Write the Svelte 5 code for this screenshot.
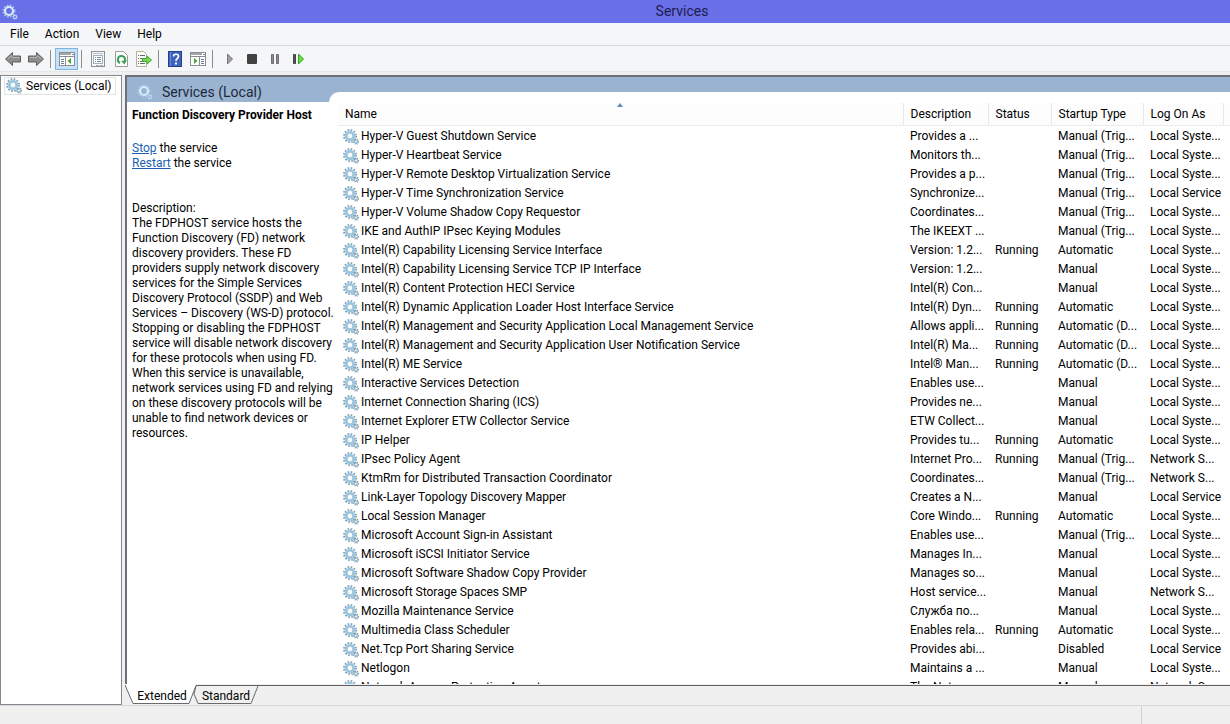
<script>
  const menus = ['File', 'Action', 'View', 'Help'];

  const columns = ['Name', 'Description', 'Status', 'Startup Type', 'Log On As'];

  const services = [
    ['Hyper-V Guest Shutdown Service', 'Provides a ...', '', 'Manual (Trig...', 'Local Syste...'],
    ['Hyper-V Heartbeat Service', 'Monitors th...', '', 'Manual (Trig...', 'Local Syste...'],
    ['Hyper-V Remote Desktop Virtualization Service', 'Provides a p...', '', 'Manual (Trig...', 'Local Syste...'],
    ['Hyper-V Time Synchronization Service', 'Synchronize...', '', 'Manual (Trig...', 'Local Service'],
    ['Hyper-V Volume Shadow Copy Requestor', 'Coordinates...', '', 'Manual (Trig...', 'Local Syste...'],
    ['IKE and AuthIP IPsec Keying Modules', 'The IKEEXT ...', '', 'Manual (Trig...', 'Local Syste...'],
    ['Intel(R) Capability Licensing Service Interface', 'Version: 1.2...', 'Running', 'Automatic', 'Local Syste...'],
    ['Intel(R) Capability Licensing Service TCP IP Interface', 'Version: 1.2...', '', 'Manual', 'Local Syste...'],
    ['Intel(R) Content Protection HECI Service', 'Intel(R) Con...', '', 'Manual', 'Local Syste...'],
    ['Intel(R) Dynamic Application Loader Host Interface Service', 'Intel(R) Dyn...', 'Running', 'Automatic', 'Local Syste...'],
    ['Intel(R) Management and Security Application Local Management Service', 'Allows appli...', 'Running', 'Automatic (D...', 'Local Syste...'],
    ['Intel(R) Management and Security Application User Notification Service', 'Intel(R) Ma...', 'Running', 'Automatic (D...', 'Local Syste...'],
    ['Intel(R) ME Service', 'Intel® Man...', 'Running', 'Automatic (D...', 'Local Syste...'],
    ['Interactive Services Detection', 'Enables use...', '', 'Manual', 'Local Syste...'],
    ['Internet Connection Sharing (ICS)', 'Provides ne...', '', 'Manual', 'Local Syste...'],
    ['Internet Explorer ETW Collector Service', 'ETW Collect...', '', 'Manual', 'Local Syste...'],
    ['IP Helper', 'Provides tu...', 'Running', 'Automatic', 'Local Syste...'],
    ['IPsec Policy Agent', 'Internet Pro...', 'Running', 'Manual (Trig...', 'Network S...'],
    ['KtmRm for Distributed Transaction Coordinator', 'Coordinates...', '', 'Manual (Trig...', 'Network S...'],
    ['Link-Layer Topology Discovery Mapper', 'Creates a N...', '', 'Manual', 'Local Service'],
    ['Local Session Manager', 'Core Windo...', 'Running', 'Automatic', 'Local Syste...'],
    ['Microsoft Account Sign-in Assistant', 'Enables use...', '', 'Manual (Trig...', 'Local Syste...'],
    ['Microsoft iSCSI Initiator Service', 'Manages In...', '', 'Manual', 'Local Syste...'],
    ['Microsoft Software Shadow Copy Provider', 'Manages so...', '', 'Manual', 'Local Syste...'],
    ['Microsoft Storage Spaces SMP', 'Host service...', '', 'Manual', 'Network S...'],
    ['Mozilla Maintenance Service', 'Служба по...', '', 'Manual', 'Local Syste...'],
    ['Multimedia Class Scheduler', 'Enables rela...', 'Running', 'Automatic', 'Local Syste...'],
    ['Net.Tcp Port Sharing Service', 'Provides abi...', '', 'Disabled', 'Local Service'],
    ['Netlogon', 'Maintains a ...', '', 'Manual', 'Local Syste...'],
    ['Network Access Protection Agent', 'The Networ...', '', 'Manual', 'Network S...']
  ];

  const description = [
    'The FDPHOST service hosts the',
    'Function Discovery (FD) network',
    'discovery providers. These FD',
    'providers supply network discovery',
    'services for the Simple Services',
    'Discovery Protocol (SSDP) and Web',
    'Services – Discovery (WS-D) protocol.',
    'Stopping or disabling the FDPHOST',
    'service will disable network discovery',
    'for these protocols when using FD.',
    'When this service is unavailable,',
    'network services using FD and relying',
    'on these discovery protocols will be',
    'unable to find network devices or',
    'resources.'
  ].join('\n');

  let view = $state('Extended');
</script>

{#snippet gear()}
  <svg class="gear" viewBox="0 0 16 16" width="16" height="16" aria-hidden="true">
    <circle cx="7" cy="7" r="6" fill="none" stroke="#86a3b4" stroke-width="2" stroke-dasharray="1.6 1.54" />
    <circle cx="7" cy="7" r="4.1" fill="#f6fbfe" stroke="#9cc8e2" stroke-width="2.4" />
    <circle cx="7" cy="7" r="2.9" fill="none" stroke="#7fa6bf" stroke-width="0.6" />
    <circle cx="13" cy="12.5" r="2.4" fill="none" stroke="#7593a6" stroke-width="1.4" stroke-dasharray="1 0.88" />
    <circle cx="13" cy="12.5" r="1.5" fill="#eef6fb" stroke="#7fabc6" stroke-width="1" />
  </svg>
{/snippet}

{#snippet paleGear()}
  <svg viewBox="0 0 16 16" width="16" height="16" aria-hidden="true">
    <circle cx="7" cy="7" r="5.7" fill="none" stroke="#a9c9f0" stroke-width="1.6" stroke-dasharray="1.6 1.4" />
    <circle cx="7" cy="7" r="4" fill="none" stroke="#d6ecfa" stroke-width="2.2" />
    <circle cx="13" cy="13" r="1.7" fill="none" stroke="#b5d3ee" stroke-width="1.5" />
  </svg>
{/snippet}

<div class="window">
  <header class="titlebar">
    {@render paleGear()}
    <h1>Services</h1>
  </header>

  <nav class="menubar">
    {#each menus as menu}
      <button>{menu}</button>
    {/each}
  </nav>

  <div class="toolbar">
    <button aria-label="Back">
      <svg viewBox="0 0 18 16" width="18" height="16"><path d="M1.5 8 8.5 1.5V5H16.5V11H8.5V14.5Z" fill="#8d8d8d" stroke="#5e5e5e" /><path d="M4 7.5 8 4.5V6.5H15.5" fill="none" stroke="#b5b5b5" /></svg>
    </button>
    <button aria-label="Forward">
      <svg viewBox="0 0 18 16" width="18" height="16"><path d="M16.5 8 9.5 1.5V5H1.5V11H9.5V14.5Z" fill="#8d8d8d" stroke="#5e5e5e" /><path d="M2.5 6.5H10V4.5L14 7.5" fill="none" stroke="#b5b5b5" /></svg>
    </button>
    <span class="separator"></span>
    <button class="pressed" aria-label="Show/Hide Console Tree">
      <svg viewBox="0 0 16 16" width="16" height="16">
        <rect x=".5" y="1.5" width="15" height="13" fill="#fff" stroke="#8b8f92" />
        <path d="M1 3H12" stroke="#a3a7aa" stroke-width="2" />
        <path d="M13 3.5H15" stroke="#6b7f94" />
        <path d="M1 5.5H15M6.5 6V14" stroke="#8b8f92" />
        <path d="M2 8.5H5M2 10.5H5M2 12.5H5" stroke="#6b7f94" />
        <path d="M12 7V13L8.5 10Z" fill="#4aa52e" />
      </svg>
    </button>
    <span class="separator"></span>
    <button aria-label="Properties">
      <svg viewBox="0 0 16 16" width="16" height="16">
        <rect x="1.5" y=".5" width="13" height="15" fill="#f8f9fa" stroke="#8b9298" />
        <path d="M3 2.5H13" stroke="#b6bdc3" />
        <rect x="3.5" y="4.5" width="9" height="8" fill="#fff" stroke="#9fb0bf" />
        <path d="M5 6.5H6M7 6.5H11M5 8.5H6M7 8.5H11M5 10.5H6M7 10.5H11" stroke="#6f8ba5" />
        <path d="M6 14.5H9M10 14.5H13" stroke="#a6adb3" />
      </svg>
    </button>
    <button aria-label="Refresh">
      <svg viewBox="0 0 16 16" width="16" height="16">
        <path d="M2.5 .5H10.5L14.5 4.5V15.5H2.5Z" fill="#fff" stroke="#9b9b9b" />
        <path d="M7 12A3.6 3.6 0 1 1 12 8.5V10" fill="none" stroke="#3fa25b" stroke-width="2" />
        <path d="M14 9 11.5 13.5 8 10Z" fill="#3fa25b" />
      </svg>
    </button>
    <button aria-label="Export List">
      <svg viewBox="0 0 16 16" width="16" height="16">
        <path d="M.5 .5H7.5L10.5 3.5V15.5H.5Z" fill="#fffef4" stroke="#b5b09b" />
        <path d="M2 4.5H3M2 7.5H3M2 10.5H3M2 12.5H3M4 4.5H9M4 7.5H7M4 10.5H7M4 12.5H9" stroke="#5d6b78" />
        <path d="M6.5 7.5H11V5L15.5 9 11 13V10.5H6.5Z" fill="#7bd75a" stroke="#43a829" />
      </svg>
    </button>
    <span class="separator"></span>
    <button aria-label="Help">
      <svg viewBox="0 0 16 16" width="16" height="16">
        <rect x="1.5" y=".5" width="13" height="15" fill="#3f62bd" stroke="#26418c" />
        <path d="M3.5 1V15" stroke="#6f8bd4" />
        <path d="M6.5 5.5C6.5 2.5 11.5 2.5 11.5 5.5C11.5 7.5 9 7.5 9 10" fill="none" stroke="#fff" stroke-width="1.7" />
        <rect x="8" y="11.5" width="2" height="2" fill="#fff" />
      </svg>
    </button>
    <button aria-label="Show/Hide Action Pane">
      <svg viewBox="0 0 16 16" width="16" height="16">
        <rect x=".5" y="1.5" width="15" height="13" fill="#fff" stroke="#8b8f92" />
        <path d="M1 3H12" stroke="#a3a7aa" stroke-width="2" />
        <path d="M13 3.5H15" stroke="#6b7f94" />
        <path d="M1 5.5H15M9.5 6V14" stroke="#8b8f92" />
        <path d="M11 8.5H14M11 10.5H14M11 12.5H14" stroke="#6b7f94" />
        <path d="M4 7V13L7.5 10Z" fill="#4aa52e" />
      </svg>
    </button>
    <span class="separator"></span>
    <button aria-label="Start Service">
      <svg viewBox="0 0 16 16" width="16" height="16"><path d="M6.5 3V13L11.5 8Z" fill="#a2a2a2" stroke="#777" /></svg>
    </button>
    <button aria-label="Stop Service">
      <svg viewBox="0 0 16 16" width="16" height="16"><rect x="3" y="3" width="10" height="10" rx="1" fill="#424242" /></svg>
    </button>
    <button aria-label="Pause Service">
      <svg viewBox="0 0 16 16" width="16" height="16"><path d="M4.5 3.5H6.5V12.5H4.5ZM9.5 3.5H11.5V12.5H9.5Z" fill="#8c8c8c" stroke="#6e6e6e" /></svg>
    </button>
    <button aria-label="Restart Service">
      <svg viewBox="0 0 16 16" width="16" height="16">
        <path d="M3.5 3.5H5.5V12.5H3.5Z" fill="#555" stroke="#444" />
        <path d="M8.5 3V13L13.5 8Z" fill="#6bdb43" stroke="#33a31a" />
      </svg>
    </button>
  </div>

  <main class="workspace">
    <aside class="tree">
      <button class="node">
        {@render gear()}
        Services (Local)
      </button>
    </aside>

    <section class="content">
      <div class="pane">
        <div class="details">
          <h2>
            {@render paleGear()}
            Services (Local)
          </h2>
          <div class="info">
            <h3>Function Discovery Provider Host</h3>
            <p><a href="#stop">Stop</a> the service<br /><a href="#restart">Restart</a> the service</p>
            <p class="description">Description:<br />{description}</p>
          </div>
        </div>

        <div class="list-area">
          <div class="list">
            <table>
              <colgroup>
                <col />
                <col class="col-description" />
                <col class="col-status" />
                <col class="col-startup" />
                <col class="col-logon" />
                <col class="col-rest" />
              </colgroup>
              <thead>
                <tr>
                  {#each columns as column, i}
                    <th>
                      {column}
                      {#if i === 0}
                        <svg class="sort" viewBox="0 0 6 4" width="6" height="4" aria-hidden="true"><path d="M0 4 3 0 6 4Z" fill="#5d8fb8" /></svg>
                      {/if}
                    </th>
                  {/each}
                  <td></td>
                </tr>
              </thead>
              <tbody>
                {#each services as [name, ...cells]}
                  <tr>
                    <td class="name"><span>{@render gear()}{name}</span></td>
                    {#each cells as cell}
                      <td>{cell}</td>
                    {/each}
                    <td></td>
                  </tr>
                {/each}
              </tbody>
            </table>
          </div>
        </div>
      </div>

      <div class="tabs">
        <svg class="tab-shapes" viewBox="0 0 136 21" width="136" height="21" aria-hidden="true">
          <path d="M0 0 8 19.5H64L71 2V0Z" fill="#fff" />
          <path d="M0 1 8 19.5H64L71 1.5" fill="none" stroke="#6a6a6a" />
          <path d="M71 2 69 10 73 19.5H126L133 2" fill="none" stroke="#6a6a6a" />
          <path d="M71 1.5H136" stroke="#5f5f5f" />
        </svg>
        {#each ['Extended', 'Standard'] as tab}
          <button aria-pressed={view === tab} onclick={() => (view = tab)}>{tab}</button>
        {/each}
        <span class="tab-line"></span>
      </div>
    </section>
  </main>

  <footer class="statusbar"><span></span></footer>
</div>

<style>
  :global(body) {
    margin: 0;
  }

  .window {
    display: flex;
    flex-direction: column;
    height: 100vh;
    overflow: hidden;
    background: #f0f0f0;
    color: #000;
    font-family: Roboto, 'Noto Sans', sans-serif;
    font-size: 12px;
    line-height: 15px;
  }

  button {
    padding: 0;
    border: 0;
    background: none;
    color: inherit;
    font: inherit;
  }

  svg {
    display: block;
    flex: none;
  }

  .titlebar {
    display: flex;
    align-items: center;
    height: 23px;
    padding-left: 2px;
    background: #696fe7;
  }

  h1 {
    flex: 1;
    margin: 0;
    padding-left: 116px;
    color: #1d1d4f;
    font-size: 14px;
    font-weight: 400;
    line-height: 23px;
    text-align: center;
  }

  .menubar {
    display: flex;
    gap: 16px;
    height: 22px;
    padding: 0 10px;
    background: #f5f6f7;
    border-bottom: 1px solid #d9dadb;
  }

  .toolbar {
    display: flex;
    align-items: center;
    height: 25px;
    padding: 0 1px;
    background: #f5f6f7;
    border-bottom: 1px solid #e6e6e6;
  }

  .toolbar button {
    display: grid;
    box-sizing: border-box;
    width: 23px;
    height: 22px;
    place-content: center;
  }

  .toolbar .pressed {
    border: 1px solid #7eb4e2;
    background: #c5e0f7;
  }

  .separator {
    width: 1px;
    height: 18px;
    margin: 0 4px 0 3px;
    background: #8d8d8d;
  }

  .workspace {
    display: flex;
    flex: 1;
    gap: 3px;
    min-height: 0;
    padding-top: 3px;
  }

  .tree {
    box-sizing: border-box;
    width: 122px;
    padding: 1px 3px;
    border: 1px solid #828790;
    background: #fff;
  }

  .node {
    display: flex;
    align-items: center;
    gap: 4px;
    height: 18px;
    padding: 0 3px 0 1px;
    border: 1px solid #e3e3e3;
    white-space: nowrap;
  }

  .content {
    display: flex;
    flex: 1;
    flex-direction: column;
    min-width: 0;
  }

  .pane {
    display: grid;
    flex: 1;
    grid-template-columns: 202px 1fr;
    min-height: 0;
    border-top: 2px solid #6b7079;
    border-left: 2px solid #6b7079;
    background: #fff;
  }

  /* long description lines run over the empty edge of the list */
  .details {
    position: relative;
    z-index: 1;
  }

  h2 {
    display: flex;
    box-sizing: border-box;
    align-items: center;
    gap: 9px;
    height: 25px;
    margin: 0;
    padding: 5px 0 0 10px;
    background: #9ab3d0;
    color: #1b2a3c;
    font-size: 14px;
    font-weight: 400;
  }

  .info {
    padding: 6px 5px;
    white-space: nowrap;
  }

  h3 {
    margin: 0;
    font-size: 12px;
    font-weight: 700;
  }

  .info p {
    margin: 18px 0 0;
  }

  .info .description {
    margin-top: 30px;
    white-space: pre;
  }

  a {
    color: #1a5fb4;
  }

  .list-area {
    display: flex;
    min-height: 0;
    padding-top: 15px;
    background: #9ab3d0;
  }

  .list {
    flex: 1;
    min-width: 0;
    padding: 11px 0 0 9px;
    border-top-left-radius: 10px;
    overflow: hidden;
    background: #fff;
  }

  table {
    width: 100%;
    border-collapse: collapse;
    table-layout: fixed;
  }

  .col-description {
    width: 85px;
  }

  .col-status {
    width: 63px;
  }

  .col-startup {
    width: 92px;
  }

  .col-logon {
    width: 80px;
  }

  .col-rest {
    width: 7px;
  }

  th,
  td {
    height: 17px;
    padding: 2px 0 0 7px;
    font-weight: 400;
    text-align: left;
    white-space: nowrap;
  }

  th,
  thead td {
    position: relative;
    height: 22px;
    padding-top: 0;
    border-bottom: 1px solid #ececec;
    background: #fdfdfd;
  }

  thead td {
    padding-left: 0;
  }

  th {
    border-right: 1px solid #e6e8ea;
  }

  .sort {
    position: absolute;
    top: 0;
    left: 50%;
    margin-left: -3px;
  }

  .name {
    padding-left: 5px;
  }

  .name span {
    display: flex;
    align-items: center;
    gap: 2px;
  }

  .tabs {
    position: relative;
    display: flex;
    height: 21px;
  }

  .tab-shapes {
    position: absolute;
    top: 0;
    left: 0;
  }

  .tabs button {
    position: relative;
    width: 64px;
    padding: 3px 0 0 10px;
  }

  .tab-line {
    flex: 1;
    height: 1px;
    margin-top: 1px;
    background: #5f5f5f;
  }

  .statusbar {
    display: flex;
    justify-content: flex-end;
    height: 18px;
    border-top: 1px solid #d7d7d7;
  }

  .statusbar span {
    width: 88px;
    border-left: 1px solid #d0d0d0;
  }
</style>
